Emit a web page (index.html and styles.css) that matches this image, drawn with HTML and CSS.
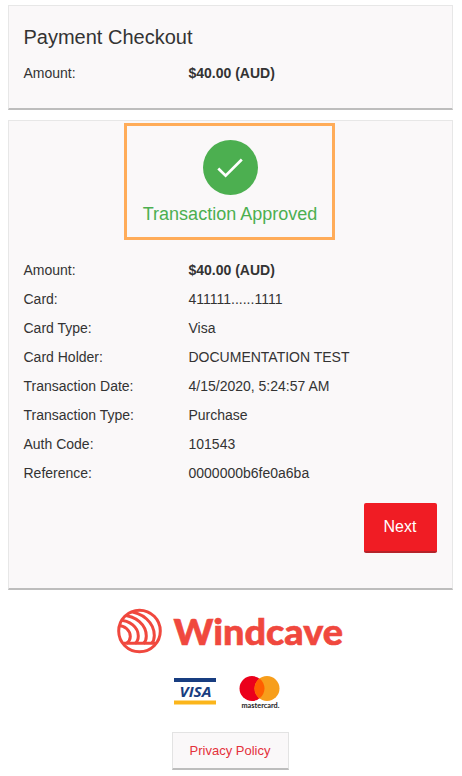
FILE: index.html
```html
<!DOCTYPE html>
<html lang="en">
<head>
<meta charset="utf-8">
<title>Payment Checkout</title>
<link rel="stylesheet" href="styles.css">
</head>
<body>
<section class="panel summary">
  <h1>Payment Checkout</h1>
  <dl class="details">
    <dt>Amount:</dt><dd class="amount">$40.00 (AUD)</dd>
  </dl>
</section>
<section class="panel result">
  <div class="status">
    <svg class="check" viewBox="0 0 55 55"><circle cx="27.5" cy="27.5" r="27.5" fill="#4caf50"/><path d="M15.3 28.500l7.300 7.200 16.200-16.200" fill="none" stroke="#fff" stroke-width="2.700"/></svg>
    <p>Transaction Approved</p>
  </div>
  <dl class="details">
    <dt>Amount:</dt><dd class="amount">$40.00 (AUD)</dd>
    <dt>Card:</dt><dd>411111......1111</dd>
    <dt>Card Type:</dt><dd>Visa</dd>
    <dt>Card Holder:</dt><dd>DOCUMENTATION TEST</dd>
    <dt>Transaction Date:</dt><dd>4/15/2020, 5:24:57 AM</dd>
    <dt>Transaction Type:</dt><dd>Purchase</dd>
    <dt>Auth Code:</dt><dd>101543</dd>
    <dt>Reference:</dt><dd>0000000b6fe0a6ba</dd>
  </dl>
  <button class="next">Next</button>
</section>
<footer>
  <svg class="windcave" viewBox="0 0 230 48">
    <defs><clipPath id="disc"><circle cx="23.5" cy="24" r="21"/></clipPath></defs>
    <g fill="none" stroke="#f0483e" stroke-width="3">
      <circle cx="23.5" cy="24" r="20.8"/>
      <g clip-path="url(#disc)">
        <path d="M6 36.200H41"/>
        <path d="M2 18.500C9 18.500 14.300 23.500 14.300 29.500C14.300 32.500 12.500 35 10.500 36.500"/>
        <path d="M3 13.300C14 13.300 22.300 20.500 22.300 29C22.300 32 21 35 19 36.500"/>
        <path d="M6 8.500C20 8.500 30.300 18 30.300 29C30.300 32 29.300 35 27.500 36.500"/>
        <path d="M11 4.500C27 5 38.300 16 38.300 28.500C38.300 32 37 35 35.500 36.500"/>
      </g>
    </g>
    <text class="wordmark" x="57.500" y="37.500" textLength="169.500" lengthAdjust="spacingAndGlyphs">Windcave</text>
  </svg>
  <div class="cards">
    <svg class="visa" viewBox="0 0 42 28"><path fill="#183d80" d="M0 0h42v4H0z"/><path fill="#fbb51b" d="M0 22.500h42v4H0z"/><text x="5.500" y="18.500" textLength="32" lengthAdjust="spacingAndGlyphs">VISA</text></svg>
    <svg class="mastercard" viewBox="0 0 42 38"><circle cx="13" cy="12.500" r="12.500" fill="#eb001b"/><circle cx="28" cy="12.500" r="12.500" fill="#f79e1b"/><path d="M20.500 2.500a12.500 12.500 0 0 1 0 20 12.500 12.500 0 0 1 0-20z" fill="#ff5f00"/><text x="2.500" y="31.500" textLength="38" lengthAdjust="spacingAndGlyphs">mastercard.</text></svg>
  </div>
  <a class="privacy">Privacy Policy</a>
</footer>
</body>
</html>
```
FILE: styles.css
```css
* { box-sizing: border-box; }
body {
  margin: 0;
  padding: 5px 9px 0 8px;
  background: #fff;
  color: #333;
  font: 14px/20px "Liberation Sans", Arial, sans-serif;
}
.panel {
  background: #faf8f9;
  border: 1px solid #e7e7e7;
  border-bottom: 2px solid #bdbdbd;
  padding: 0 15px 0 14.5px;
}
.summary { height: 105px; margin-bottom: 10px; }
.result { height: 470px; display: flex; flex-direction: column; padding-top: 2px; }
h1 { margin: 0; padding-top: 19px; font-size: 20px; font-weight: 400; line-height: 24px; }
.details { margin: 0; display: grid; grid-template-columns: 165px 1fr; grid-auto-rows: 29px; align-items: center; }
.summary .details { padding-top: 9px; }
.result .details { padding-top: 15px; }
dd { margin: 0; }
.amount { font-weight: 700; }
.status {
  width: 211px;
  height: 117px;
  margin-left: 100.5px;
  border: 3px solid #ffac59;
  padding: 14px 0 0 1px;
  display: flex;
  flex-direction: column;
  align-items: center;
}
.check { width: 55px; height: 55px; flex: none; }
.status p { margin: 7px 0 0; font-size: 18px; line-height: 24px; color: #4caf50; white-space: nowrap; }
.next {
  align-self: flex-end;
  width: 73px;
  height: 50px;
  margin-top: 16px;
  padding: 1px 1px 1px 0;
  background: #f01c24;
  border: 0;
  border-bottom: 2px solid #b5232a;
  border-radius: 2px;
  color: #fff;
  font: 16px "Liberation Sans", Arial, sans-serif;
}
footer { display: flex; flex-direction: column; align-items: center; padding-top: 17px; }
.windcave { width: 230px; height: 48px; }
.wordmark { font: 900 36px Lato, sans-serif; fill: #f0483e; stroke: #f0483e; stroke-width: 0.6px; }
.cards { display: flex; gap: 23px; height: 38px; margin: 21px 6px 0 0; }
.visa { width: 42px; height: 28px; margin-top: 2px; }
.visa text { font: italic 700 15px "Open Sans", sans-serif; fill: #183d80; }
.mastercard { width: 42px; height: 38px; overflow: visible; }
.mastercard text { font: 700 7.5px Lato, sans-serif; fill: #222; }
.privacy {
  width: 117px;
  height: 38px;
  margin-top: 18px;
  padding-right: 1px;
  background: #faf8f9;
  border: 1px solid #e3e3e3;
  border-bottom: 2px solid #bdbdbd;
  color: #e4313b;
  font-size: 13px;
  line-height: 35px;
  text-align: center;
}
```
